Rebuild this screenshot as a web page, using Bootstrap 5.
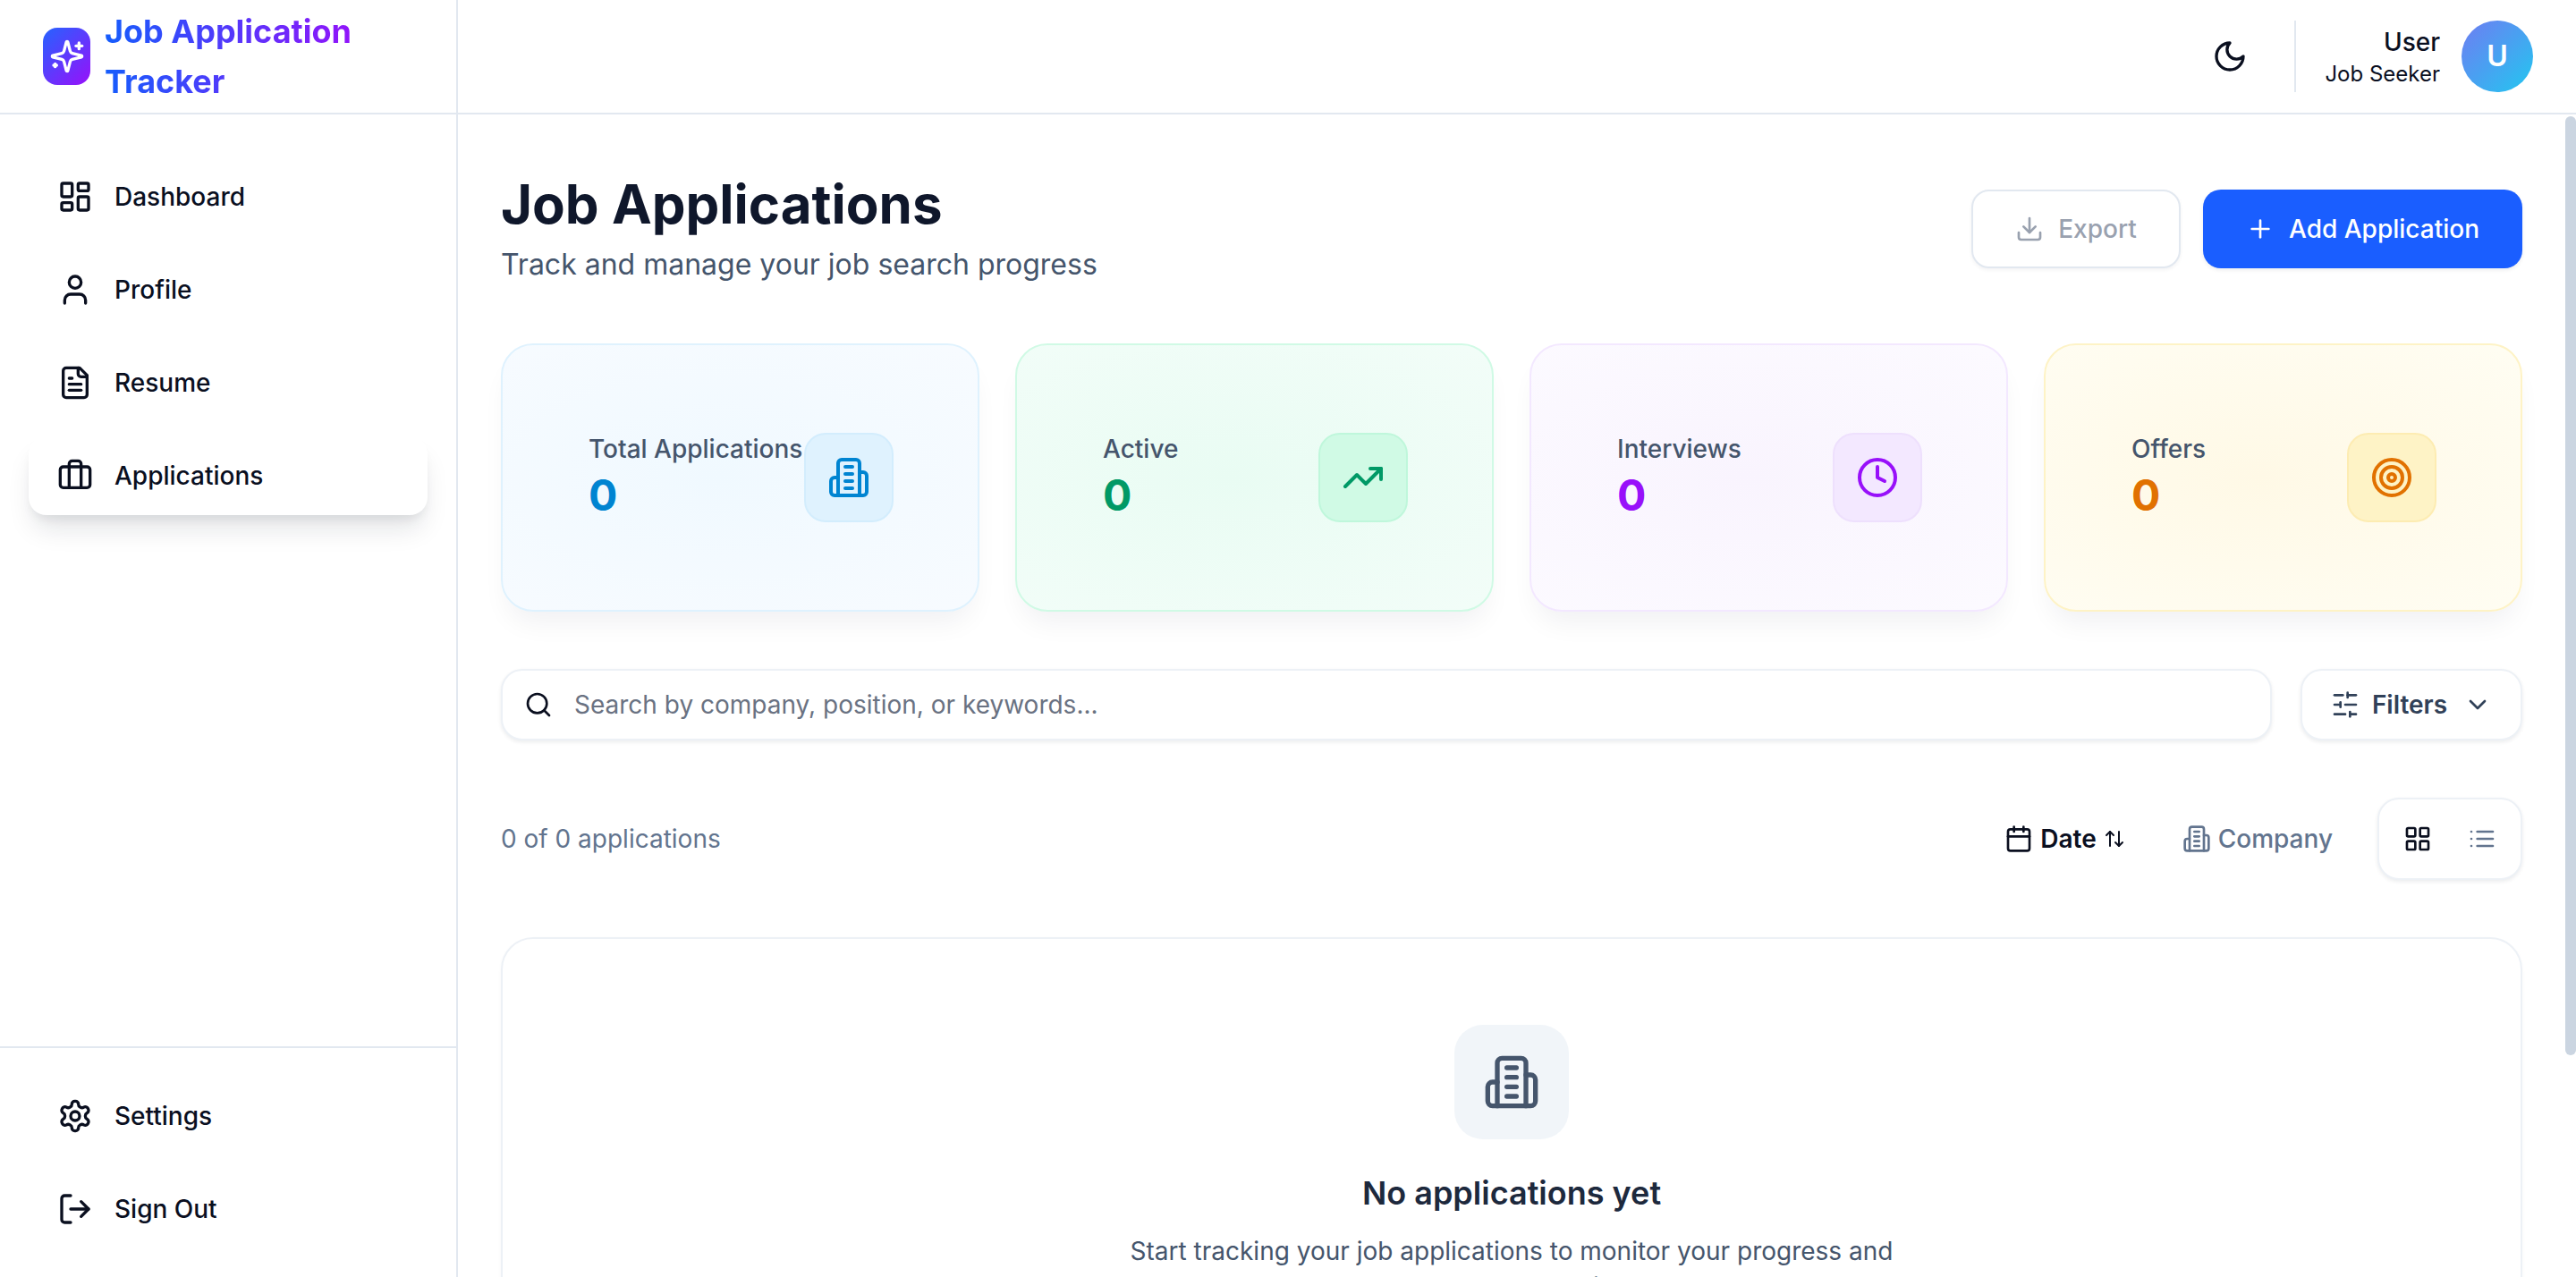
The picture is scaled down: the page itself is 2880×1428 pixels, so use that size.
<!DOCTYPE html>
<html lang="en">

<head>
  <title>Job Application Tracker</title>
  <meta charset="utf-8">
  <meta name="viewport" content="width=device-width, initial-scale=1">
  <link href="https://cdn.jsdelivr.net/npm/bootstrap@5.3.2/dist/css/bootstrap.min.css" rel="stylesheet">
  <style>
    html, body { height: 100%; }
    body { font-family: Inter, "Liberation Sans", sans-serif; color: #0a0f1f; background: #fff; overflow: hidden; }
    svg.ico { fill: none; stroke: currentColor; stroke-width: 2; stroke-linecap: round; stroke-linejoin: round; flex-shrink: 0; }
    .ico-24 { width: 24px; height: 24px; }
    .ico-32 { width: 32px; height: 32px; }
    .ico-40 { width: 40px; height: 40px; }
    .ico-48 { width: 48px; height: 48px; }
    .ico-64 { width: 64px; height: 64px; }

    .app-shell { height: 100vh; }
    .side-pane { width: 512px; flex: none; border-right: 2px solid #e2e8f0; }
    .brand-row { height: 128px; border-bottom: 2px solid #e2e8f0; padding: 0 48px; gap: 16px; }
    .brand-mark { width: 53px; height: 64px; border-radius: 16px; background: linear-gradient(135deg, #2563ff, #9810fa); color: #fff; flex: none; }
    .brand-text { font-size: 36px; line-height: 56px; font-weight: 700; width: 292px; background: linear-gradient(90deg, #155dfc, #9810fa); -webkit-background-clip: text; background-clip: text; color: transparent; }
    .side-nav { padding: 48px 32px; gap: 16px; }
    .side-foot { border-top: 2px solid #e2e8f0; padding: 32px; gap: 16px; }
    .side-link { height: 88px; padding: 0 32px; gap: 24px; border-radius: 20px; font-size: 28px; font-weight: 500; color: #0a0f1f; text-decoration: none; }
    .side-link.on { background: #fff; box-shadow: 0 20px 30px -6px rgba(15, 23, 43, .12), 0 8px 12px -4px rgba(15, 23, 43, .08); }

    .top-strip { height: 128px; flex: none; border-bottom: 2px solid #e2e8f0; padding-right: 48px; }
    .theme-btn { width: 40px; height: 40px; margin-right: 52px; color: #0a0f1f; }
    .user-box { border-left: 2px solid #e2e8f0; height: 80px; padding-left: 32px; gap: 24px; }
    .user-name { font-size: 28px; line-height: 40px; font-weight: 500; }
    .user-role { font-size: 24px; line-height: 32px; }
    .user-pic { width: 80px; height: 80px; border-radius: 50%; background: linear-gradient(135deg, #6f7cf2, #22c7f0); color: #fff; font-size: 32px; font-weight: 600; }

    .main-wrap { min-height: 0; }
    .main-pane { overflow: hidden; padding: 64px 48px 64px; min-width: 0; }
    .scroll-rail { width: 12px; flex: none; background: #fff; padding-top: 2px; }
    .scroll-thumb { height: 1050px; background: #cbd5e1; border-radius: 6px; }

    .page-head { height: 128px; }
    .page-title { font-size: 60px; line-height: 72px; font-weight: 700; color: #0f172b; margin: 0 0 8px; }
    .page-sub { font-size: 32px; line-height: 48px; color: #45556c; margin: 0; }
    .head-btn { height: 88px; border-radius: 20px; font-size: 28px; font-weight: 500; gap: 16px; padding: 0; }
    .export-btn { width: 234px; background: #fff; border: 2px solid #e2e8f0; color: #99a1af; box-shadow: 0 2px 4px rgba(15, 23, 43, .05); }
    .add-btn { width: 357px; background: #1a5eff; border: 0; color: #fff; box-shadow: 0 2px 4px rgba(15, 23, 43, .08); }

    .stat-wrap { display: grid; grid-template-columns: repeat(4, 1fr); gap: 40px; margin-top: 64px; }
    .stat-box { height: 300px; border: 2px solid; border-radius: 36px; padding: 0 94px 0 96px; box-shadow: 0 20px 30px -8px rgba(15, 23, 43, .06); }
    .stat-label { font-size: 28px; line-height: 40px; font-weight: 500; color: #45556c; white-space: nowrap; }
    .stat-val { font-size: 48px; line-height: 64px; font-weight: 700; }
    .stat-pic { width: 100px; height: 100px; border: 2px solid; border-radius: 24px; flex: none; }
    .tone-sky { background: radial-gradient(ellipse at 45% 50%, #f0f9ff, #f7fbff 95%); border-color: #dff2fe; color: #0084d1; }
    .tone-sky .stat-pic { background: #dff2fe; border-color: #d3edfd; }
    .tone-green { background: radial-gradient(ellipse at 45% 50%, #e9fcf3, #f2fdf8 95%); border-color: #d0fae5; color: #009966; }
    .tone-green .stat-pic { background: #d0fae5; border-color: #bff7db; }
    .tone-purple { background: radial-gradient(ellipse at 45% 50%, #f9f4fe, #fcfaff 95%); border-color: #f3e8ff; color: #9810fa; }
    .tone-purple .stat-pic { background: #f3e8ff; border-color: #eee0fd; }
    .tone-amber { background: radial-gradient(ellipse at 45% 50%, #fff9e6, #fffdf2 95%); border-color: #fef3c6; color: #e17100; }
    .tone-amber .stat-pic { background: #fef3c6; border-color: #fdecb2; }

    .tool-row { margin-top: 64px; gap: 32px; }
    .find-box { height: 80px; background: #fff; border: 2px solid #edf1f6; border-radius: 24px; box-shadow: 0 2px 4px rgba(15, 23, 43, .08); padding: 0 24px; gap: 24px; color: #0a0f1f; }
    .find-box input { border: 0; outline: 0; padding: 0; background: none; font-size: 28px; color: #0a0f1f; width: 100%; }
    .find-box input::placeholder { color: #6a7282; opacity: 1; }
    .filter-btn { width: 248px; height: 80px; background: #fff; border: 2px solid #edf1f6; border-radius: 24px; box-shadow: 0 2px 4px rgba(15, 23, 43, .08); font-size: 28px; font-weight: 600; color: #314158; gap: 14px; padding: 0; }

    .list-head { margin-top: 64px; height: 92px; }
    .list-count { font-size: 28px; color: #62748e; }
    .sort-btn { background: none; border: 0; padding: 0; font-size: 28px; font-weight: 500; gap: 8px; }
    .sort-date { color: #0a0f1f; font-weight: 600; margin-right: 64px; }
    .sort-company { color: #62748e; margin-right: 50px; }
    .view-box { width: 162px; height: 92px; background: #fff; border: 2px solid #edf1f6; border-radius: 24px; box-shadow: 0 2px 4px rgba(15, 23, 43, .08); gap: 8px; }
    .view-opt { width: 64px; height: 64px; color: #0a0f1f; }
    .view-opt.off { color: #62748e; }

    .empty-box { margin-top: 64px; border: 2px solid #edf1f6; border-radius: 36px; padding: 96px 96px 96px; box-shadow: 0 2px 4px rgba(15, 23, 43, .03); }
    .empty-pic { width: 128px; height: 128px; border-radius: 32px; background: #f1f5f9; color: #45556c; }
    .empty-title { font-size: 36px; line-height: 56px; font-weight: 600; color: #1d293d; margin: 32px 0 0; }
    .empty-text { font-size: 28px; line-height: 40px; color: #45556c; width: 896px; margin: 17px auto 48px; }
  </style>
</head>

<body>

  <svg class="d-none">
    <symbol id="i-building" viewBox="0 0 24 24"><path d="M6 22V4a2 2 0 0 1 2-2h8a2 2 0 0 1 2 2v18Z"/><path d="M6 12H4a2 2 0 0 0-2 2v6a2 2 0 0 0 2 2h2"/><path d="M18 9h2a2 2 0 0 1 2 2v9a2 2 0 0 1-2 2h-2"/><path d="M10 6h4"/><path d="M10 10h4"/><path d="M10 14h4"/><path d="M10 18h4"/></symbol>
  </svg>

  <div class="app-shell d-flex">

    <aside class="side-pane d-flex flex-column">
      <div class="brand-row d-flex align-items-center">
        <span class="brand-mark d-flex align-items-center justify-content-center">
          <svg class="ico ico-40" viewBox="0 0 24 24"><path d="M9.937 15.5A2 2 0 0 0 8.5 14.063l-6.135-1.582a.5.5 0 0 1 0-.962L8.5 9.936A2 2 0 0 0 9.937 8.5l1.582-6.135a.5.5 0 0 1 .963 0L14.063 8.5A2 2 0 0 0 15.5 9.937l6.135 1.581a.5.5 0 0 1 0 .964L15.5 14.063a2 2 0 0 0-1.437 1.437l-1.582 6.135a.5.5 0 0 1-.963 0z"/><path d="M20 3v4"/><path d="M22 5h-4"/><path d="M4 17v2"/><path d="M5 18H3"/></svg>
        </span>
        <span class="brand-text">Job Application Tracker</span>
      </div>

      <nav class="side-nav d-flex flex-column flex-grow-1">
        <a class="side-link d-flex align-items-center" href="#">
          <svg class="ico ico-40" viewBox="0 0 24 24"><rect x="3" y="3" width="7" height="9" rx="1"/><rect x="14" y="3" width="7" height="5" rx="1"/><rect x="14" y="12" width="7" height="9" rx="1"/><rect x="3" y="16" width="7" height="5" rx="1"/></svg>
          Dashboard
        </a>
        <a class="side-link d-flex align-items-center" href="#">
          <svg class="ico ico-40" viewBox="0 0 24 24"><path d="M19 21v-2a4 4 0 0 0-4-4H9a4 4 0 0 0-4 4v2"/><circle cx="12" cy="7" r="4"/></svg>
          Profile
        </a>
        <a class="side-link d-flex align-items-center" href="#">
          <svg class="ico ico-40" viewBox="0 0 24 24"><path d="M15 2H6a2 2 0 0 0-2 2v16a2 2 0 0 0 2 2h12a2 2 0 0 0 2-2V7Z"/><path d="M14 2v4a2 2 0 0 0 2 2h4"/><path d="M10 9H8"/><path d="M16 13H8"/><path d="M16 17H8"/></svg>
          Resume
        </a>
        <a class="side-link on d-flex align-items-center" href="#">
          <svg class="ico ico-40" viewBox="0 0 24 24"><path d="M16 20V4a2 2 0 0 0-2-2h-4a2 2 0 0 0-2 2v16"/><rect x="2" y="6" width="20" height="14" rx="2"/></svg>
          Applications
        </a>
      </nav>

      <div class="side-foot d-flex flex-column">
        <a class="side-link d-flex align-items-center" href="#">
          <svg class="ico ico-40" viewBox="0 0 24 24"><path d="M12.22 2h-.44a2 2 0 0 0-2 2v.18a2 2 0 0 1-1 1.73l-.43.25a2 2 0 0 1-2 0l-.15-.08a2 2 0 0 0-2.73.73l-.22.38a2 2 0 0 0 .73 2.73l.15.1a2 2 0 0 1 1 1.72v.51a2 2 0 0 1-1 1.74l-.15.09a2 2 0 0 0-.73 2.73l.22.38a2 2 0 0 0 2.73.73l.15-.08a2 2 0 0 1 2 0l.43.25a2 2 0 0 1 1 1.73V20a2 2 0 0 0 2 2h.44a2 2 0 0 0 2-2v-.18a2 2 0 0 1 1-1.73l.43-.25a2 2 0 0 1 2 0l.15.08a2 2 0 0 0 2.73-.73l.22-.39a2 2 0 0 0-.73-2.73l-.15-.08a2 2 0 0 1-1-1.74v-.5a2 2 0 0 1 1-1.74l.15-.09a2 2 0 0 0 .73-2.73l-.22-.38a2 2 0 0 0-2.73-.73l-.15.08a2 2 0 0 1-2 0l-.43-.25a2 2 0 0 1-1-1.73V4a2 2 0 0 0-2-2z"/><circle cx="12" cy="12" r="3"/></svg>
          Settings
        </a>
        <a class="side-link d-flex align-items-center" href="#">
          <svg class="ico ico-40" viewBox="0 0 24 24"><path d="M9 21H5a2 2 0 0 1-2-2V5a2 2 0 0 1 2-2h4"/><path d="m16 17 5-5-5-5"/><path d="M21 12H9"/></svg>
          Sign Out
        </a>
      </div>
    </aside>

    <div class="d-flex flex-column flex-grow-1" style="min-width: 0">
      <header class="top-strip d-flex align-items-center justify-content-end">
        <span class="theme-btn d-flex">
          <svg class="ico ico-40" viewBox="0 0 24 24"><path d="M12 3a6 6 0 0 0 9 9 9 9 0 1 1-9-9Z"/></svg>
        </span>
        <div class="user-box d-flex align-items-center">
          <div class="text-end">
            <div class="user-name">User</div>
            <div class="user-role">Job Seeker</div>
          </div>
          <div class="user-pic d-flex align-items-center justify-content-center">U</div>
        </div>
      </header>

      <div class="main-wrap d-flex flex-grow-1">
        <main class="main-pane flex-grow-1">
          <div class="page-head d-flex justify-content-between align-items-center">
            <div>
              <h1 class="page-title">Job Applications</h1>
              <p class="page-sub">Track and manage your job search progress</p>
            </div>
            <div class="d-flex align-items-center" style="gap: 25px">
              <button class="btn head-btn export-btn d-flex align-items-center justify-content-center" type="button">
                <svg class="ico ico-32" viewBox="0 0 24 24"><path d="M21 15v4a2 2 0 0 1-2 2H5a2 2 0 0 1-2-2v-4"/><path d="m7 10 5 5 5-5"/><path d="M12 15V3"/></svg>
                Export
              </button>
              <button class="btn head-btn add-btn d-flex align-items-center justify-content-center" type="button">
                <svg class="ico ico-32" viewBox="0 0 24 24"><path d="M5 12h14"/><path d="M12 5v14"/></svg>
                Add Application
              </button>
            </div>
          </div>

          <div class="stat-wrap">
            <div class="stat-box tone-sky d-flex align-items-center justify-content-between">
              <div><div class="stat-label">Total Applications</div><div class="stat-val">0</div></div>
              <div class="stat-pic d-flex align-items-center justify-content-center"><svg class="ico ico-48"><use href="#i-building"/></svg></div>
            </div>
            <div class="stat-box tone-green d-flex align-items-center justify-content-between">
              <div><div class="stat-label">Active</div><div class="stat-val">0</div></div>
              <div class="stat-pic d-flex align-items-center justify-content-center"><svg class="ico ico-48" viewBox="0 0 24 24"><path d="M22 7l-8.5 8.5-5-5L2 17"/><path d="M16 7h6v6"/></svg></div>
            </div>
            <div class="stat-box tone-purple d-flex align-items-center justify-content-between">
              <div><div class="stat-label">Interviews</div><div class="stat-val">0</div></div>
              <div class="stat-pic d-flex align-items-center justify-content-center"><svg class="ico ico-48" viewBox="0 0 24 24"><circle cx="12" cy="12" r="10"/><path d="M12 6v6l4 2"/></svg></div>
            </div>
            <div class="stat-box tone-amber d-flex align-items-center justify-content-between">
              <div><div class="stat-label">Offers</div><div class="stat-val">0</div></div>
              <div class="stat-pic d-flex align-items-center justify-content-center"><svg class="ico ico-48" viewBox="0 0 24 24"><circle cx="12" cy="12" r="10"/><circle cx="12" cy="12" r="6"/><circle cx="12" cy="12" r="2"/></svg></div>
            </div>
          </div>

          <div class="tool-row d-flex">
            <div class="find-box d-flex align-items-center flex-grow-1">
              <svg class="ico ico-32" viewBox="0 0 24 24"><circle cx="11" cy="11" r="8"/><path d="m21 21-4.3-4.3"/></svg>
              <input type="text" placeholder="Search by company, position, or keywords...">
            </div>
            <button class="btn filter-btn d-flex align-items-center justify-content-center" type="button">
              <svg class="ico ico-32" viewBox="0 0 24 24"><path d="M21 4h-7"/><path d="M10 4H3"/><path d="M21 12h-9"/><path d="M8 12H3"/><path d="M21 20h-5"/><path d="M12 20H3"/><path d="M14 2v4"/><path d="M8 10v4"/><path d="M16 18v4"/></svg>
              Filters
              <svg class="ico ico-32 ms-1" viewBox="0 0 24 24"><path d="m6 9 6 6 6-6"/></svg>
            </button>
          </div>

          <div class="list-head d-flex align-items-center">
            <span class="list-count me-auto">0 of 0 applications</span>
            <button class="btn sort-btn sort-date d-flex align-items-center" type="button">
              <svg class="ico ico-32" viewBox="0 0 24 24"><path d="M8 2v4"/><path d="M16 2v4"/><rect x="3" y="4" width="18" height="18" rx="2"/><path d="M3 10h18"/></svg>
              Date
              <svg class="ico ico-24" viewBox="0 0 24 24"><path d="m21 16-4 4-4-4"/><path d="M17 20V4"/><path d="m3 8 4-4 4 4"/><path d="M7 4v16"/></svg>
            </button>
            <button class="btn sort-btn sort-company d-flex align-items-center" type="button">
              <svg class="ico ico-32"><use href="#i-building"/></svg>
              Company
            </button>
            <div class="view-box d-flex align-items-center justify-content-center">
              <span class="view-opt d-flex align-items-center justify-content-center">
                <svg class="ico ico-32" viewBox="0 0 24 24"><rect x="3" y="3" width="7" height="7" rx="1"/><rect x="14" y="3" width="7" height="7" rx="1"/><rect x="14" y="14" width="7" height="7" rx="1"/><rect x="3" y="14" width="7" height="7" rx="1"/></svg>
              </span>
              <span class="view-opt off d-flex align-items-center justify-content-center">
                <svg class="ico ico-32" viewBox="0 0 24 24"><path d="M3 12h.01"/><path d="M3 18h.01"/><path d="M3 6h.01"/><path d="M8 12h13"/><path d="M8 18h13"/><path d="M8 6h13"/></svg>
              </span>
            </div>
          </div>

          <div class="empty-box text-center">
            <div class="empty-pic d-flex align-items-center justify-content-center mx-auto"><svg class="ico ico-64"><use href="#i-building"/></svg></div>
            <h3 class="empty-title">No applications yet</h3>
            <p class="empty-text">Start tracking your job applications to monitor your progress and land your dream job</p>
          </div>
        </main>
        <div class="scroll-rail"><div class="scroll-thumb"></div></div>
      </div>
    </div>
  </div>

  <script src="https://cdn.jsdelivr.net/npm/bootstrap@5.3.2/dist/js/bootstrap.bundle.min.js"></script>
</body>

</html>
